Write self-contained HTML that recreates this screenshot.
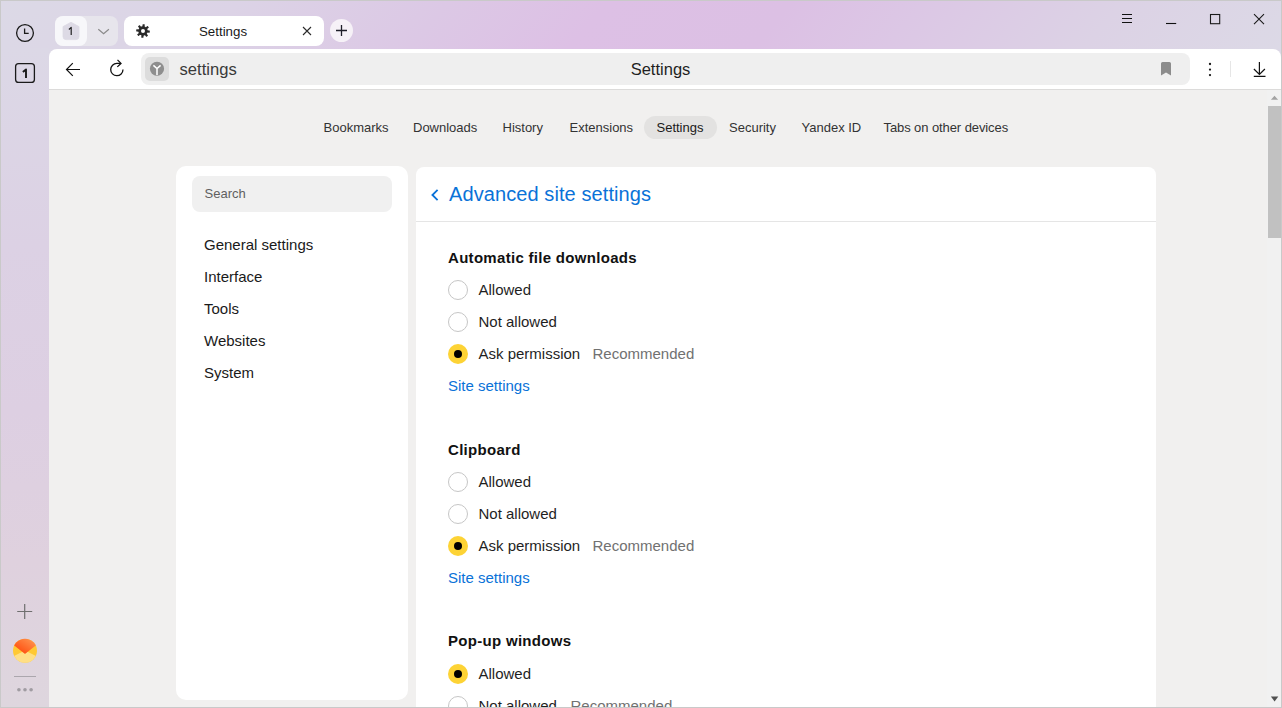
<!DOCTYPE html>
<html><head><meta charset="utf-8">
<style>
*{margin:0;padding:0;box-sizing:border-box}
html,body{width:1282px;height:708px;overflow:hidden;font-family:"Liberation Sans",sans-serif;color:#000}
body{position:relative;background:#c9c9c9}
.a{position:absolute}
.t{position:absolute;white-space:nowrap;line-height:20px;height:20px}
#frame{left:1px;top:1px;width:1280px;height:706px;overflow:hidden;background:linear-gradient(130deg,#dcd9e6 0%,#dcd3e6 18%,#dcc8e5 34%,#ddc0e5 46%,#dcc0e4 60%,#dcc7e5 70%,#dcd2e5 85%,#dcd9e6 100%) 0 0/1280px 48px no-repeat,#dcd8e6}
#sidegrad{left:1px;top:48px;width:48px;height:659px;background:linear-gradient(180deg,#dcd8e6 0%,#dcd1e4 30%,#ddcfe2 55%,#dfd1de 78%,#ded6de 100%)}
#toolbar{left:49px;top:49px;width:1232px;height:40px;background:#fff;border-radius:8px 8px 0 0}
#tbline{left:49px;top:89px;width:1232px;height:1px;background:#dcdbda}
#page{left:49px;top:90px;width:1232px;height:617px;background:#f1f0ef;overflow:hidden}
#sb{left:1267px;top:90px;width:14px;height:617px;background:#f1f1f1}
#thumb{left:1268px;top:106px;width:13px;height:132px;background:#c1c1c1}
/* tabs */
#tgroup{left:55px;top:16px;width:63px;height:30px;border-radius:8px;background:#e7e5ec}
#tgroupL{left:55px;top:16px;width:32px;height:30px;border-radius:8px;background:#f7f7fa}
#tab{left:124px;top:16px;width:200px;height:30px;border-radius:8px;background:#fff}
#newtab{left:330px;top:19px;width:23px;height:23px;border-radius:50%;background:#f6f1f7}
#tabtitle{left:199px;top:22px;font-size:13.3px;color:#1a1a1a}
/* toolbar */
#addr{left:141px;top:53px;width:1049px;height:32px;border-radius:8px;background:#efefef}
#ybox{left:145px;top:57px;width:24px;height:24px;border-radius:5px;background:#dcdcdc}
#addrtext{left:179.5px;top:59.5px;font-size:16.6px;color:#3a3a3a}
#pagetitle{left:600px;width:121px;text-align:center;top:59px;font-size:16.5px;color:#1f1f1f}
/* nav */
.nav{font-size:13px;color:#333;top:118px}
#pill{left:644px;top:116px;width:73px;height:23px;border-radius:11.5px;background:#e3e2e1}
/* cards */
#lcard{left:176px;top:166px;width:232px;height:534px;border-radius:10px;background:#fff}
#search{left:192px;top:176px;width:200px;height:36px;border-radius:8px;background:#f0f0f0}
#searchtext{left:204.5px;top:184px;font-size:13px;color:#5f5f5f}
.menu{left:204px;font-size:15px;color:#1a1a1a}
#rcard{left:416px;top:167px;width:740px;height:560px;border-radius:8px;background:#fff}
#divider{left:416px;top:221px;width:740px;height:1px;background:#e5e5e5}
#title{left:449px;top:182px;font-size:20px;letter-spacing:0.09px;line-height:24px;height:24px;color:#0a72d8}
.h{left:448px;font-size:15px;font-weight:bold;color:#111;letter-spacing:0.3px}
.lab{left:478.5px;font-size:15px;color:#1f1f1f}
.rec{font-size:15px;color:#717171}
.link{left:448px;font-size:15px;color:#0a72d8}
.radio{position:absolute;left:448px;width:20px;height:20px;border-radius:50%;border:1px solid #c6c6c6;background:#fff}
.radio.on{border:none;background:#fdd335}
.radio.on::after{content:"";position:absolute;left:6px;top:6px;width:8px;height:8px;border-radius:50%;background:#000}
</style></head>
<body>
<div id="frame" class="a"></div>
<div id="sidegrad" class="a"></div>

<!-- tab strip -->
<div id="tgroup" class="a"></div>
<div id="tgroupL" class="a"></div>
<div id="tab" class="a"></div>
<div id="newtab" class="a"></div>
<div id="tabtitle" class="t">Settings</div>

<div id="toolbar" class="a"></div>
<div id="tbline" class="a"></div>
<div id="addr" class="a"></div>
<div id="ybox" class="a"></div>
<div id="addrtext" class="t">settings</div>
<div id="pagetitle" class="t">Settings</div>

<div id="page" class="a"></div>
<div id="sb" class="a"></div>
<div id="thumb" class="a"></div>

<!-- nav -->
<div id="pill" class="a"></div>
<div class="t nav" style="left:323.5px">Bookmarks</div>
<div class="t nav" style="left:413px">Downloads</div>
<div class="t nav" style="left:502.5px">History</div>
<div class="t nav" style="left:569.5px">Extensions</div>
<div class="t nav" style="left:656.5px;color:#1a1a1a">Settings</div>
<div class="t nav" style="left:729px">Security</div>
<div class="t nav" style="left:801.5px">Yandex ID</div>
<div class="t nav" style="left:883.5px;letter-spacing:-0.09px">Tabs on other devices</div>

<!-- left card -->
<div id="lcard" class="a"></div>
<div id="search" class="a"></div>
<div id="searchtext" class="t">Search</div>
<div class="t menu" style="top:234.5px">General settings</div>
<div class="t menu" style="top:266.5px">Interface</div>
<div class="t menu" style="top:298.5px">Tools</div>
<div class="t menu" style="top:330.5px">Websites</div>
<div class="t menu" style="top:362.5px">System</div>

<!-- right card -->
<div id="rcard" class="a"></div>
<div id="title" class="t">Advanced site settings</div>
<div id="divider" class="a"></div>

<div class="t h" style="top:247.5px">Automatic file downloads</div>
<div class="radio" style="top:280px"></div><div class="t lab" style="top:280px">Allowed</div>
<div class="radio" style="top:312px"></div><div class="t lab" style="top:312px">Not allowed</div>
<div class="radio on" style="top:344px"></div><div class="t lab" style="top:344px">Ask permission</div><div class="t rec" style="left:592.5px;top:344px">Recommended</div>
<div class="t link" style="top:375.5px">Site settings</div>

<div class="t h" style="top:439.5px">Clipboard</div>
<div class="radio" style="top:472px"></div><div class="t lab" style="top:472px">Allowed</div>
<div class="radio" style="top:504px"></div><div class="t lab" style="top:504px">Not allowed</div>
<div class="radio on" style="top:536px"></div><div class="t lab" style="top:536px">Ask permission</div><div class="t rec" style="left:592.5px;top:536px">Recommended</div>
<div class="t link" style="top:567.5px">Site settings</div>

<div class="t h" style="top:631px">Pop-up windows</div>
<div class="radio on" style="top:664px"></div><div class="t lab" style="top:664px">Allowed</div>
<div class="radio" style="top:696px"></div><div class="t lab" style="top:696px">Not allowed</div><div class="t rec" style="left:570.5px;top:696px">Recommended</div>

<!-- bottom window border overlay -->
<div class="a" style="left:0;top:707px;width:1282px;height:1px;background:#c9c9c9"></div>
<div class="a" style="left:1281px;top:0;width:1px;height:708px;background:#c9c9c9"></div>

<!-- icons -->
<svg class="a" style="left:0;top:0" width="1282" height="708" viewBox="0 0 1282 708">
<!-- sidebar clock -->
<circle cx="25" cy="33" r="8.4" fill="none" stroke="#1a1a1a" stroke-width="1.3"/>
<path d="M24.6 28.6V33.3H28.7" fill="none" stroke="#1a1a1a" stroke-width="1.3"/>
<!-- sidebar tab square -->
<rect x="15.6" y="63.6" width="18.8" height="18.8" rx="3" fill="none" stroke="#1a1a1a" stroke-width="1.3"/>
<path d="M22.9 72 L26 69.4 V77.9" fill="none" stroke="#1a1a1a" stroke-width="1.9" stroke-linejoin="round"/>
<!-- tab group pentagon -->
<path d="M71 22.3 L79 26.6 V36.6 Q79 39.6 76 39.6 H66 Q63 39.6 63 36.6 V26.6 Z" fill="#dddae5" stroke="#dddae5" stroke-width="0.8" stroke-linejoin="round"/>
<path d="M68.9 29.5 L71.2 27.4 V35.1" fill="none" stroke="#1a1a1a" stroke-width="1.15" stroke-linejoin="round"/>
<path d="M98.3 29.2 L103.6 33.7 L108.9 29.2" fill="none" stroke="#8a8a8a" stroke-width="1.2"/>
<!-- gear -->
<g fill="#2a2a2a"><circle cx="143" cy="31" r="4.7"/><rect x="141.9" y="24.2" width="2.2" height="3.6" rx="0.4" transform="rotate(6 143 31)"/><rect x="141.9" y="24.2" width="2.2" height="3.6" rx="0.4" transform="rotate(51 143 31)"/><rect x="141.9" y="24.2" width="2.2" height="3.6" rx="0.4" transform="rotate(96 143 31)"/><rect x="141.9" y="24.2" width="2.2" height="3.6" rx="0.4" transform="rotate(141 143 31)"/><rect x="141.9" y="24.2" width="2.2" height="3.6" rx="0.4" transform="rotate(186 143 31)"/><rect x="141.9" y="24.2" width="2.2" height="3.6" rx="0.4" transform="rotate(231 143 31)"/><rect x="141.9" y="24.2" width="2.2" height="3.6" rx="0.4" transform="rotate(276 143 31)"/><rect x="141.9" y="24.2" width="2.2" height="3.6" rx="0.4" transform="rotate(321 143 31)"/></g><circle cx="143" cy="31" r="2" fill="#fff"/>
<!-- tab close -->
<path d="M303 27 L311 35 M311 27 L303 35" stroke="#2a2a2a" stroke-width="1.1"/>
<!-- new tab plus -->
<path d="M341.5 25V36 M336 30.5H347" stroke="#1e1e28" stroke-width="1.3"/>
<!-- window controls -->
<path d="M1122 14.5H1132 M1122 18.5H1132 M1122 22.5H1132" stroke="#111" stroke-width="1.1"/>
<path d="M1166 23.5H1176.2" stroke="#111" stroke-width="1.1"/>
<rect x="1210.5" y="14.5" width="9.2" height="9.2" fill="none" stroke="#1a1a1a" stroke-width="1.1"/>
<path d="M1254 14.2L1264 24.2M1264 14.2L1254 24.2" stroke="#1a1a1a" stroke-width="1.1"/>
<!-- back -->
<path d="M80 69.5H66.6 M72.8 63.2L66.5 69.5L72.8 75.8" fill="none" stroke="#111" stroke-width="1.2"/>
<!-- reload -->
<path d="M123 69.6 A6.15 6.15 0 1 1 116.9 63.4 H120.6" fill="none" stroke="#111" stroke-width="1.3"/>
<path d="M117.5 59.9 L121 63.4 L117.3 66.9" fill="none" stroke="#111" stroke-width="1.3"/>
<!-- Y logo -->
<circle cx="157" cy="68.8" r="7.1" fill="#8e8e8e"/>
<path d="M153.4 65.4 L157 68.5 L160.6 65.4 M157 68.5 V75.2" fill="none" stroke="#fff" stroke-width="1.5"/>
<!-- bookmark -->
<path d="M1161 63.6 Q1161 62 1162.6 62 H1169.4 Q1171 62 1171 63.6 V75.5 L1166 72.4 L1161 75.5 Z" fill="#8c8c8c"/>
<!-- kebab -->
<circle cx="1210" cy="64" r="1.15" fill="#1a1a1a"/><circle cx="1210" cy="69.6" r="1.15" fill="#1a1a1a"/><circle cx="1210" cy="75.1" r="1.15" fill="#1a1a1a"/>
<rect x="1230" y="61" width="1" height="16" fill="#e6e6e6"/>
<!-- download -->
<path d="M1259.4 62V74.3 M1253.9 69L1259.4 74.4L1264.9 69 M1253.8 76.3H1265.5" fill="none" stroke="#111" stroke-width="1.2"/>
<!-- sidebar bottom -->
<path d="M24.7 604V619 M17.2 611.5H32.2" stroke="#6f6f6f" stroke-width="1.2"/>
<defs>
 <linearGradient id="mr" x1="0" y1="1" x2="1" y2="0"><stop offset="0" stop-color="#ff3d00"/><stop offset="1" stop-color="#ffa05a"/></linearGradient>
 <clipPath id="mc"><circle cx="25" cy="650.8" r="12"/></clipPath>
</defs>
<g clip-path="url(#mc)">
 <rect x="13" y="638.8" width="24" height="24" fill="#ffc933"/>
 <path d="M13 656.5 L25 650.5 L37 656.5 V663 H13Z" fill="#ffdf85"/>
 <path d="M13 638 H37 V644.6 L25.6 653.6 Q25 654.1 24.4 653.6 L13 644.6Z" fill="url(#mr)"/>
</g>
<rect x="14" y="676" width="22" height="1" fill="#aba6ad"/>
<circle cx="18.9" cy="689.8" r="1.8" fill="#a09ca2"/><circle cx="25" cy="689.8" r="1.8" fill="#a09ca2"/><circle cx="31.1" cy="689.8" r="1.8" fill="#a09ca2"/>
<!-- card chevron -->
<path d="M437.6 189.8 L432.4 195 L437.6 200.2" fill="none" stroke="#0a72d8" stroke-width="1.8"/>
<!-- scroll arrows -->
<path d="M1270.9 99.8 H1278.1 L1274.5 95.7Z" fill="#a3a3a3"/>
<path d="M1270.9 696.5 H1278.3 L1274.6 701.4Z" fill="#505050"/>
</svg>
</body></html>
